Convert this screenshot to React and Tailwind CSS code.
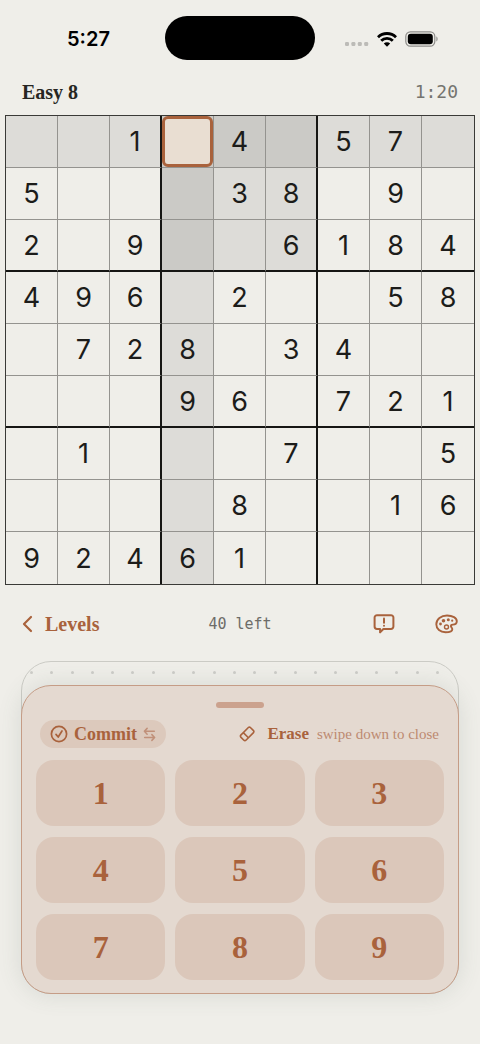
import React from 'react';

const PUZZLE = [
  '  1 4 57 ',
  '5   38 9 ',
  '2 9  6184',
  '496 2  58',
  ' 728 34  ',
  '   96 721',
  ' 1   7  5',
  '    8  16',
  '92461    ',
];

const SELECTED = { row: 0, col: 3 };

// Cells in the selected row, column or box are shaded, overlaps get a darker tone
function cellShade(row, col) {
  const inLine = row === SELECTED.row || col === SELECTED.col;
  const inBox =
    Math.floor(row / 3) === Math.floor(SELECTED.row / 3) &&
    Math.floor(col / 3) === Math.floor(SELECTED.col / 3);
  if (inLine && inBox) return 'bg-[#cbcac6]';
  if (inLine || inBox) return 'bg-[#dddcd8]';
  return '';
}

function cellRight(col) {
  if (col === 8) return '';
  return col % 3 === 2 ? 'border-r-2 border-r-[#161614]' : 'border-r border-r-[#94938f]';
}

function cellBottom(row) {
  if (row === 8) return '';
  return row % 3 === 2 ? 'border-b-2 border-b-[#161614]' : 'border-b border-b-[#94938f]';
}

const StatusBar = () => (
  <div className="grid grid-cols-[1fr_150px_1fr] items-center pt-4">
    <div className="pl-3 pt-0.5 text-center font-['Inter',sans-serif] text-xl font-semibold text-black">5:27</div>
    <div className="h-11 rounded-full bg-black" />
    <div className="flex items-center justify-center gap-2 pr-3 pt-0.5">
      <svg width="24" height="14" viewBox="0 0 24 14" fill="#bcbbb7">
        <rect x="0" y="10" width="4" height="4" rx="1.2" />
        <rect x="6.4" y="10" width="4" height="4" rx="1.2" />
        <rect x="12.8" y="10" width="4" height="4" rx="1.2" />
        <rect x="19.2" y="10" width="4" height="4" rx="1.2" />
      </svg>
      <svg width="20" height="15" viewBox="0 0 20 15" fill="none" stroke="#000" strokeWidth="2.8">
        <path d="M1 5.2a12.8 12.8 0 0 1 18 0" />
        <path d="M4.2 8.8a8 8 0 0 1 11.6 0" />
        <path d="M10 14.8l-3.2-3.2a4.5 4.5 0 0 1 6.4 0z" fill="#000" stroke="none" />
      </svg>
      <svg width="34" height="16" viewBox="0 0 34 16" fill="none">
        <rect x="0.8" y="0.8" width="29" height="14.4" rx="4.6" stroke="#8d8c89" strokeWidth="1.2" />
        <rect x="2.8" y="2.8" width="25" height="10.4" rx="3" fill="#000" />
        <path d="M31.4 5.6c1.6.6 1.6 4.2 0 4.8z" fill="#8d8c89" />
      </svg>
    </div>
  </div>
);

const Board = () => (
  <div className="px-[5px]">
    <div className="grid aspect-square grid-cols-9 grid-rows-9 border border-[#3a3a37]">
      {PUZZLE.map((line, row) =>
        line.split('').map((value, col) => {
          const selected = row === SELECTED.row && col === SELECTED.col;
          return (
            <button
              key={`${row}-${col}`}
              type="button"
              aria-label={`Row ${row + 1}, column ${col + 1}`}
              className={`relative flex items-center justify-center font-['Inter',sans-serif] text-[27px] leading-none text-[#1c1c1a] ${cellShade(row, col)} ${cellRight(col)} ${cellBottom(row)}`}
            >
              {value.trim()}
              {selected && (
                <span className="absolute inset-0 rounded-md border-[3px] border-[#a9623c] bg-[#e9ded2]" />
              )}
            </button>
          );
        })
      )}
    </div>
  </div>
);

const Toolbar = () => (
  <div className="grid grid-cols-3 items-center px-[22px] pt-[25px] text-[#a9623c]">
    <button type="button" className="flex items-center gap-3 text-xl font-bold leading-7">
      <svg width="11" height="18" viewBox="0 0 11 18" fill="none" stroke="currentColor" strokeWidth="2.2" strokeLinecap="round" strokeLinejoin="round">
        <path d="M9 2L2 9l7 7" />
      </svg>
      Levels
    </button>
    <span className="text-center font-['DejaVu_Sans_Mono',monospace] text-[15px] text-[#6d6c68]">40 left</span>
    <div className="flex justify-end gap-10">
      <button type="button" aria-label="Report a problem">
        <svg width="22" height="22" viewBox="0 0 22 22" fill="none" stroke="currentColor" strokeWidth="2" strokeLinejoin="round" strokeLinecap="round">
          <path d="M4 2.2h14a2.4 2.4 0 0 1 2.4 2.4v9a2.4 2.4 0 0 1-2.4 2.4h-7.6l-3.3 3.4v-3.4H4a2.4 2.4 0 0 1-2.4-2.4v-9A2.4 2.4 0 0 1 4 2.2z" />
          <path d="M11 5.6v4.2" />
          <path d="M11 12.7v.1" />
        </svg>
      </button>
      <button type="button" aria-label="Colors">
        <svg width="23" height="22" viewBox="0 0 23 22" fill="none" stroke="currentColor" strokeWidth="1.9" strokeLinejoin="round">
          <path d="M12 2.5C6 2.5 1.3 6.3 1.3 11.3c0 4.7 4 7.9 9.2 7.9 4.2 0 6.800-1.3 6.800-3 0-1.4-1.4-1.9-1.4-3.1 0-1 .8-1.5 1.9-1.5 2.4 0 4-1.2 4-3.3C21.8 5 17.6 2.5 12 2.5z" />
          <circle cx="11.5" cy="14" r="2" strokeWidth="1.4" />
          <g fill="currentColor" stroke="none">
            <circle cx="5.5" cy="11" r="1.4" />
            <circle cx="8.5" cy="7.8" r="1.8" />
            <circle cx="13.3" cy="6.8" r="1.5" />
            <circle cx="17.2" cy="7.7" r="1.1" />
          </g>
        </svg>
      </button>
    </div>
  </div>
);

const CheckIcon = () => (
  <svg width="18" height="18" viewBox="0 0 18 18" fill="none" stroke="currentColor" strokeWidth="1.7" strokeLinecap="round" strokeLinejoin="round">
    <circle cx="9" cy="9" r="7.6" />
    <path d="M6 9.4l2.2 2.6L12 6" />
  </svg>
);

const SwapIcon = () => (
  <svg width="13" height="15" viewBox="0 0 12 14" fill="none" stroke="#c09079" strokeWidth="1.4" strokeLinecap="round" strokeLinejoin="round">
    <path d="M10.5 4H1.2M3.8 1.3L1.2 4l2.6 2.7" />
    <path d="M1.5 9.8h9.3M8.2 7.1l2.6 2.7-2.6 2.7" />
  </svg>
);

const EraserIcon = () => (
  <svg width="16" height="16" viewBox="0 0 16 16" fill="none" stroke="currentColor" strokeWidth="1.6" strokeLinejoin="round">
    <path d="M9.4 1.5a1.4 1.4 0 0 1 2 0l3.1 3.1a1.4 1.4 0 0 1 0 2l-7.6 7.6a1.4 1.4 0 0 1-2 0L1.8 11.1a1.4 1.4 0 0 1 0-2z" />
    <path d="M4.3 6.6l5.1 5.1" />
  </svg>
);

const Keypad = () => (
  <div className="mx-[21px] mt-[23px] rounded-[30px] border border-[#cbcbc5]">
    <div className="flex h-[23px] items-center justify-between pb-0.5 pl-2 pr-[19px]">
      {Array.from({ length: 21 }, (_, i) => (
        <span key={i} className="size-[3px] rounded-full bg-[#cdcdc8]" />
      ))}
    </div>

    <div className="relative -mx-px -mb-px rounded-[30px] border border-[#c59c86] bg-[#e4d9d0] px-3.5 pb-[13px] pt-4 shadow-[0_0_24px_rgba(70,90,80,0.14)]">
      <div className="mx-auto h-1.5 w-12 rounded-full bg-[#cba28e]" />

      <div className="flex items-center justify-between pb-3 pl-1 pr-[5px] pt-3 text-[#a9623c]">
        <button type="button" className="flex h-7 items-center gap-1.5 rounded-full bg-[#dcc9bc] px-2.5 text-lg font-bold leading-none">
          <CheckIcon />
          Commit
          <SwapIcon />
        </button>
        <div className="flex items-center gap-2">
          <button type="button" className="flex items-center gap-3 text-[17px] font-bold">
            <EraserIcon />
            Erase
          </button>
          <span className="text-[15px] text-[#bd8a71]">swipe down to close</span>
        </div>
      </div>

      <div className="grid grid-cols-3 gap-x-2.5 gap-y-[11px]">
        {[1, 2, 3, 4, 5, 6, 7, 8, 9].map((n) => (
          <button
            key={n}
            type="button"
            className="h-[66px] rounded-[18px] bg-[#dbc7ba] text-[32px] font-bold leading-none text-[#a9623c]"
          >
            {n}
          </button>
        ))}
      </div>
    </div>
  </div>
);

export default function App() {
  return (
    <div className="min-h-screen bg-[#efeee9] font-['Liberation_Serif',serif]">
      <StatusBar />
      <header className="flex items-center justify-between px-[22px] pb-[9px] pt-[18px]">
        <h1 className="text-xl font-bold leading-7 text-[#262622]">Easy 8</h1>
        <span className="font-['DejaVu_Sans_Mono',monospace] text-lg leading-7 text-[#75746f]">1:20</span>
      </header>
      <Board />
      <Toolbar />
      <Keypad />
    </div>
  );
}
